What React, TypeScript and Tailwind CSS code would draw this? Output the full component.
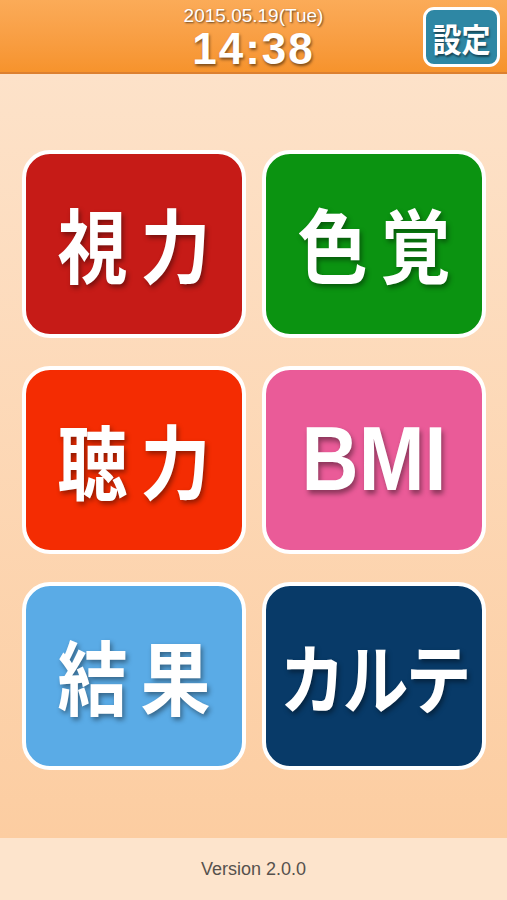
const tiles = [
  { label: "視力", bg: "bg-[#c61b17]", kind: "kanji" },
  { label: "色覚", bg: "bg-[#0b9311]", kind: "kanji" },
  { label: "聴力", bg: "bg-[#f42c02]", kind: "kanji" },
  { label: "BMI", bg: "bg-[#ea5b98]", kind: "latin" },
  { label: "結果", bg: "bg-[#5aabe6]", kind: "kanji" },
  { label: "カルテ", bg: "bg-[#083a68]", kind: "kana" },
];

const jp = "font-['Noto_Sans_CJK_JP','Noto_Sans',sans-serif]";

function Tile({ label, bg, kind }: { label: string; bg: string; kind: string }) {
  const text =
    kind === "latin"
      ? "font-['Liberation_Sans',Arial,sans-serif] text-[79px] tracking-[0px]"
      : kind === "kana"
        ? `${jp} text-[66px] tracking-[-3px]`
        : `${jp} text-[70px] tracking-[13px] pl-[13px]`;
  return (
    <button
      className={`flex h-[188px] items-center justify-center rounded-[28px] border-4 border-white ${bg}`}
    >
      <span
        className={`-mt-[4px] block scale-y-[1.16] font-bold leading-none text-white [text-shadow:2px_3px_5px_rgba(0,0,0,0.4)] ${text}`}
      >
        {label}
      </span>
    </button>
  );
}

export default function App() {
  return (
    <div className="flex h-[900px] w-full flex-col overflow-hidden">
      <header className="relative flex h-[74px] flex-col items-center border-b-2 border-[#dc8030] bg-gradient-to-b from-[#fbab58] to-[#f6932c]">
        <div className="mt-[5px] font-['Liberation_Sans',Arial,sans-serif] text-[19px] leading-[22px] text-white [text-shadow:1px_1px_2px_rgba(0,0,0,0.6)]">
          2015.05.19(Tue)
        </div>
        <div className="mt-[1px] font-['Liberation_Sans',Arial,sans-serif] text-[44px] font-bold leading-[42px] tracking-[2px] text-white [text-shadow:1px_2px_3px_rgba(0,0,0,0.5)]">
          14:38
        </div>
        <button className="absolute right-[7px] top-[7px] flex h-[60px] w-[77px] items-center justify-center rounded-[11px] border-[3px] border-white bg-[#2e87a4]">
          <span
            className={`block scale-y-[1.12] ${jp} text-[29px] font-bold leading-none text-white [text-shadow:1px_2px_2px_rgba(0,0,0,0.5)]`}
          >
            設定
          </span>
        </button>
      </header>
      <main className="flex-1 bg-gradient-to-b from-[#fde2c9] to-[#fccda1] pt-[76px]">
        <div className="grid grid-cols-2 gap-x-[16px] gap-y-[28px] pl-[22px] pr-[21px]">
          {tiles.map((t) => (
            <Tile key={t.label} {...t} />
          ))}
        </div>
      </main>
      <footer className="flex h-[62px] items-center justify-center bg-[#fde4cc]">
        <span className="font-['Liberation_Sans',Arial,sans-serif] text-[18px] text-[#56514c]">
          Version 2.0.0
        </span>
      </footer>
    </div>
  );
}
